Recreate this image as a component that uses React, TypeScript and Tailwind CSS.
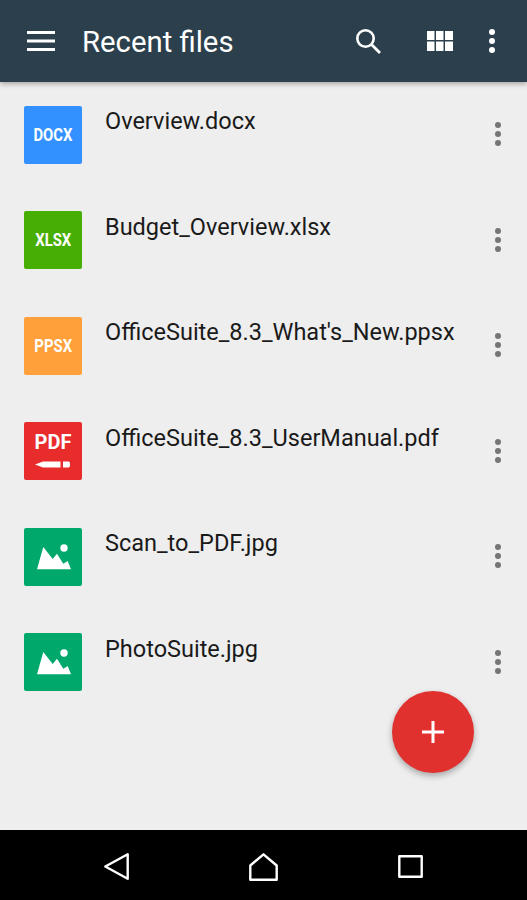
const files = [
  { name: 'Overview.docx', label: 'DOCX', color: 'bg-[#3391ff]' },
  { name: 'Budget_Overview.xlsx', label: 'XLSX', color: 'bg-[#47ae03]' },
  { name: "OfficeSuite_8.3_What's_New.ppsx", label: 'PPSX', color: 'bg-[#ffa03a]' },
  { name: 'OfficeSuite_8.3_UserManual.pdf', label: 'PDF', color: 'bg-[#e82b2b]' },
  { name: 'Scan_to_PDF.jpg', label: 'image', color: 'bg-[#00a86b]' },
  { name: 'PhotoSuite.jpg', label: 'image', color: 'bg-[#00a86b]' },
];

function Dots({ className }: { className: string }) {
  return (
    <svg width="10" height="26" viewBox="0 0 10 26" className={className}>
      <circle cx="5" cy="4" r="3" />
      <circle cx="5" cy="13" r="3" />
      <circle cx="5" cy="22" r="3" />
    </svg>
  );
}

function FileIcon({ label, color }: { label: string; color: string }) {
  let inner = <span className="mt-[1px] inline-block scale-x-[0.85] text-[17.5px] font-bold text-white">{label}</span>;
  if (label === 'PDF') {
    inner = (
      <div className="flex h-full w-full flex-col items-center pt-[10px]">
        <span className="text-[20px] leading-[20px] font-bold text-white">PDF</span>
        <svg width="36" height="7" viewBox="0 0 36 7" className="mt-[8.5px]">
          <path d="M0 3.5 L8 0.5 H25.5 V6.5 H8 Z M28 0.5 H33.5 Q35 0.5 35 3.5 Q35 6.5 33.5 6.5 H28 Z" fill="#fff" />
        </svg>
      </div>
    );
  }
  if (label === 'image') {
    inner = (
      <svg width="58" height="58" viewBox="0 0 58 58">
        <circle cx="40" cy="20" r="3.7" fill="#fff" />
        <path d="M13 41.3 L19.3 19 L28.7 31 L33 25.7 L39.3 35.7 L43.7 33 L47 41.3 Z" fill="#fff" />
      </svg>
    );
  }
  return <div className={`flex h-[58px] w-[58px] shrink-0 items-center justify-center rounded-[2px] ${color}`}>{inner}</div>;
}

export default function App() {
  return (
    <div className="relative flex h-[900px] w-[527px] flex-col overflow-hidden bg-[#eeeeee] font-['Roboto',sans-serif]">
      <header className="z-10 flex h-[82px] shrink-0 items-center bg-[#2c3f4c] pl-[27px] pr-[30px] shadow-[0_2px_5px_rgba(0,0,0,0.3)]">
        <svg width="28" height="20" viewBox="0 0 28 20">
          <path d="M0 1.5H28M0 10H28M0 18.5H28" stroke="#fff" strokeWidth="2.8" />
        </svg>
        <h1 className="ml-[27px] mt-[4px] text-[29.3px] text-white">Recent files</h1>
        <svg width="26" height="26" viewBox="0 0 26 26" className="ml-auto">
          <circle cx="10.5" cy="10.5" r="8.2" fill="none" stroke="#fff" strokeWidth="2.6" />
          <path d="M16.5 16.5 L25 25" stroke="#fff" strokeWidth="2.8" />
        </svg>
        <svg width="26" height="20" viewBox="0 0 26 20" className="ml-[46px]" fill="#fff">
          <path d="M0 0h7.5v9H0zM9 0h7.5v9H9zM18 0h8v9h-8zM0 10.5h7.5V20H0zM9 10.5h7.5V20H9zM18 10.5h8V20h-8z" />
        </svg>
        <Dots className="ml-[34px] fill-white" />
      </header>

      <main className="flex-1 pt-[23.6px]">
        {files.map((file) => (
          <div key={file.name} className="flex h-[105.5px] items-start pl-[24px] pr-[24px]">
            <FileIcon label={file.label} color={file.color} />
            <span className="ml-[23px] mt-[-1.5px] text-[23.5px] text-[#1a1a1a]">{file.name}</span>
            <Dots className="ml-auto mt-[15.5px] shrink-0 fill-[#757575]" />
          </div>
        ))}
      </main>

      <button className="absolute left-[392.3px] top-[690.7px] flex h-[82px] w-[82px] items-center justify-center rounded-full bg-[#e0312f] shadow-[0_3px_6px_rgba(0,0,0,0.3)]">
        <svg width="22" height="22" viewBox="0 0 22 22">
          <path d="M11 0V22M0 11H22" stroke="#fff" strokeWidth="3" />
        </svg>
      </button>

      <nav className="flex h-[70px] shrink-0 items-center bg-black pl-[104px] pt-[3px]">
        <svg width="25" height="27" viewBox="0 0 25 27" fill="none" stroke="#fff" strokeWidth="2.4" strokeLinejoin="round">
          <path d="M23.7 1.3 V25.7 L1.3 13.5 Z" />
        </svg>
        <svg width="29" height="28" viewBox="0 0 29 28" fill="none" stroke="#fff" strokeWidth="2.4" strokeLinejoin="round" className="ml-[120px]">
          <path d="M1.3 12.5 L14.5 1.3 L27.7 12.5 V26.7 H1.3 Z" />
        </svg>
        <svg width="25" height="23" viewBox="0 0 25 23" fill="none" stroke="#fff" strokeWidth="2.4" strokeLinejoin="round" className="ml-[120px]">
          <rect x="1.3" y="1.3" width="22.4" height="20.4" />
        </svg>
      </nav>
    </div>
  );
}
